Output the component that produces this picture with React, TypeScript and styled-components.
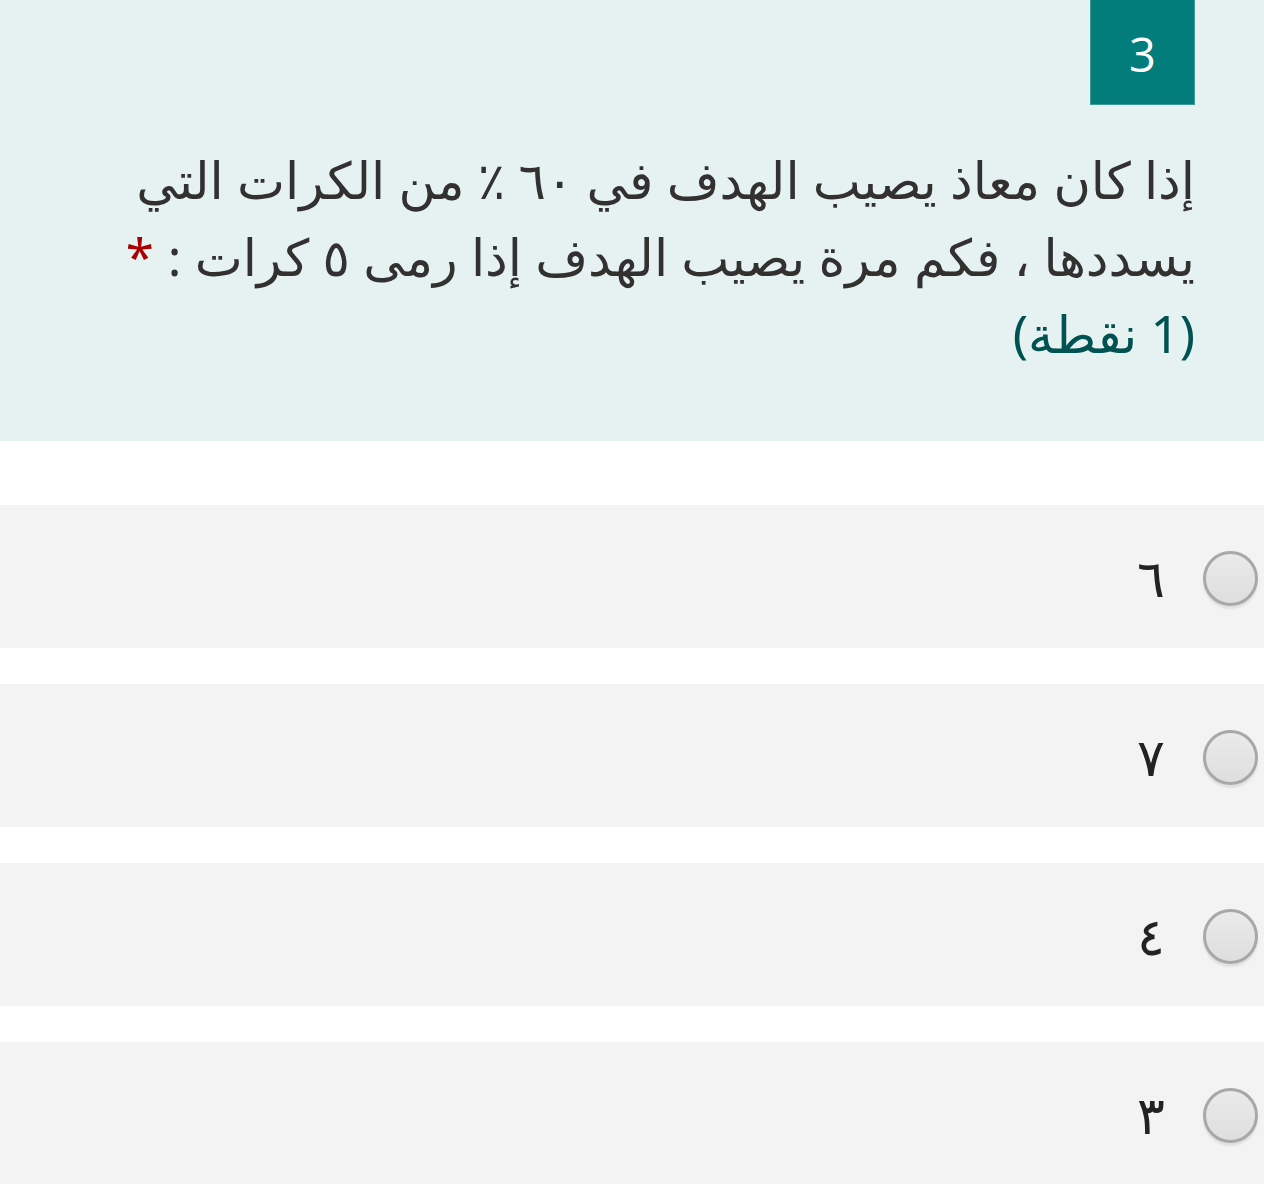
import styled, { createGlobalStyle } from 'styled-components'

const GlobalStyle = createGlobalStyle`
  html, body {
    margin: 0;
    padding: 0;
    background: #fff;
  }
  body {
    font-family: "Noto Sans", "DejaVu Sans", sans-serif;
    color: #333;
  }
`

const Page = styled.div`
  direction: rtl;
  width: 1264px;
`

const Header = styled.div`
  background: #e6f2f2;
  padding: 0 69px 69px 40px;
`

const Badge = styled.div`
  width: 105px;
  height: 105px;
  padding-top: 3px;
  background: #037c7c;
  color: #fff;
  display: flex;
  align-items: center;
  justify-content: center;
  font-family: "Open Sans", "Noto Sans", sans-serif;
  font-size: 47px;
  font-weight: 400;
  border: 1px solid #3e9a9a;
  border-top: none;
  box-sizing: border-box;
`

const Title = styled.div`
  margin-top: 36px;
  font-size: 51px;
  line-height: 77px;
  color: #323130;
`

const Required = styled.span`
  color: #a80000;
  margin-right: 14px;
`

const Points = styled.div`
  color: #005252;
`

const Options = styled.div`
  margin-top: 64px;
  display: flex;
  flex-direction: column;
  gap: 36px;
`

const Option = styled.label`
  height: 143px;
  background: #f3f3f3;
  display: flex;
  align-items: center;
  padding-right: 6px;
  gap: 38px;
`

const Radio = styled.span`
  width: 55px;
  height: 55px;
  margin-top: 4px;
  border-radius: 50%;
  box-sizing: border-box;
  border: 3px solid #a8a8a8;
  background: linear-gradient(#eaeaea, #dedede);
  box-shadow: 0 3px 2px rgba(0, 0, 0, 0.08);
  flex: none;
`

const OptionText = styled.span`
  font-size: 52px;
  color: #222;
`

const answers = ['٦', '٧', '٤', '٣']

export default function App() {
  return (
    <Page>
      <GlobalStyle />
      <Header>
        <Badge>3</Badge>
        <Title>
          إذا كان معاذ يصيب الهدف في ٦٠ ٪ من الكرات التي
          <br />
          يسددها ، فكم مرة يصيب الهدف إذا رمى ٥ كرات :<Required>*</Required>
          <Points>(1 نقطة)</Points>
        </Title>
      </Header>
      <Options>
        {answers.map(a => (
          <Option key={a}>
            <Radio />
            <OptionText>{a}</OptionText>
          </Option>
        ))}
      </Options>
    </Page>
  )
}
